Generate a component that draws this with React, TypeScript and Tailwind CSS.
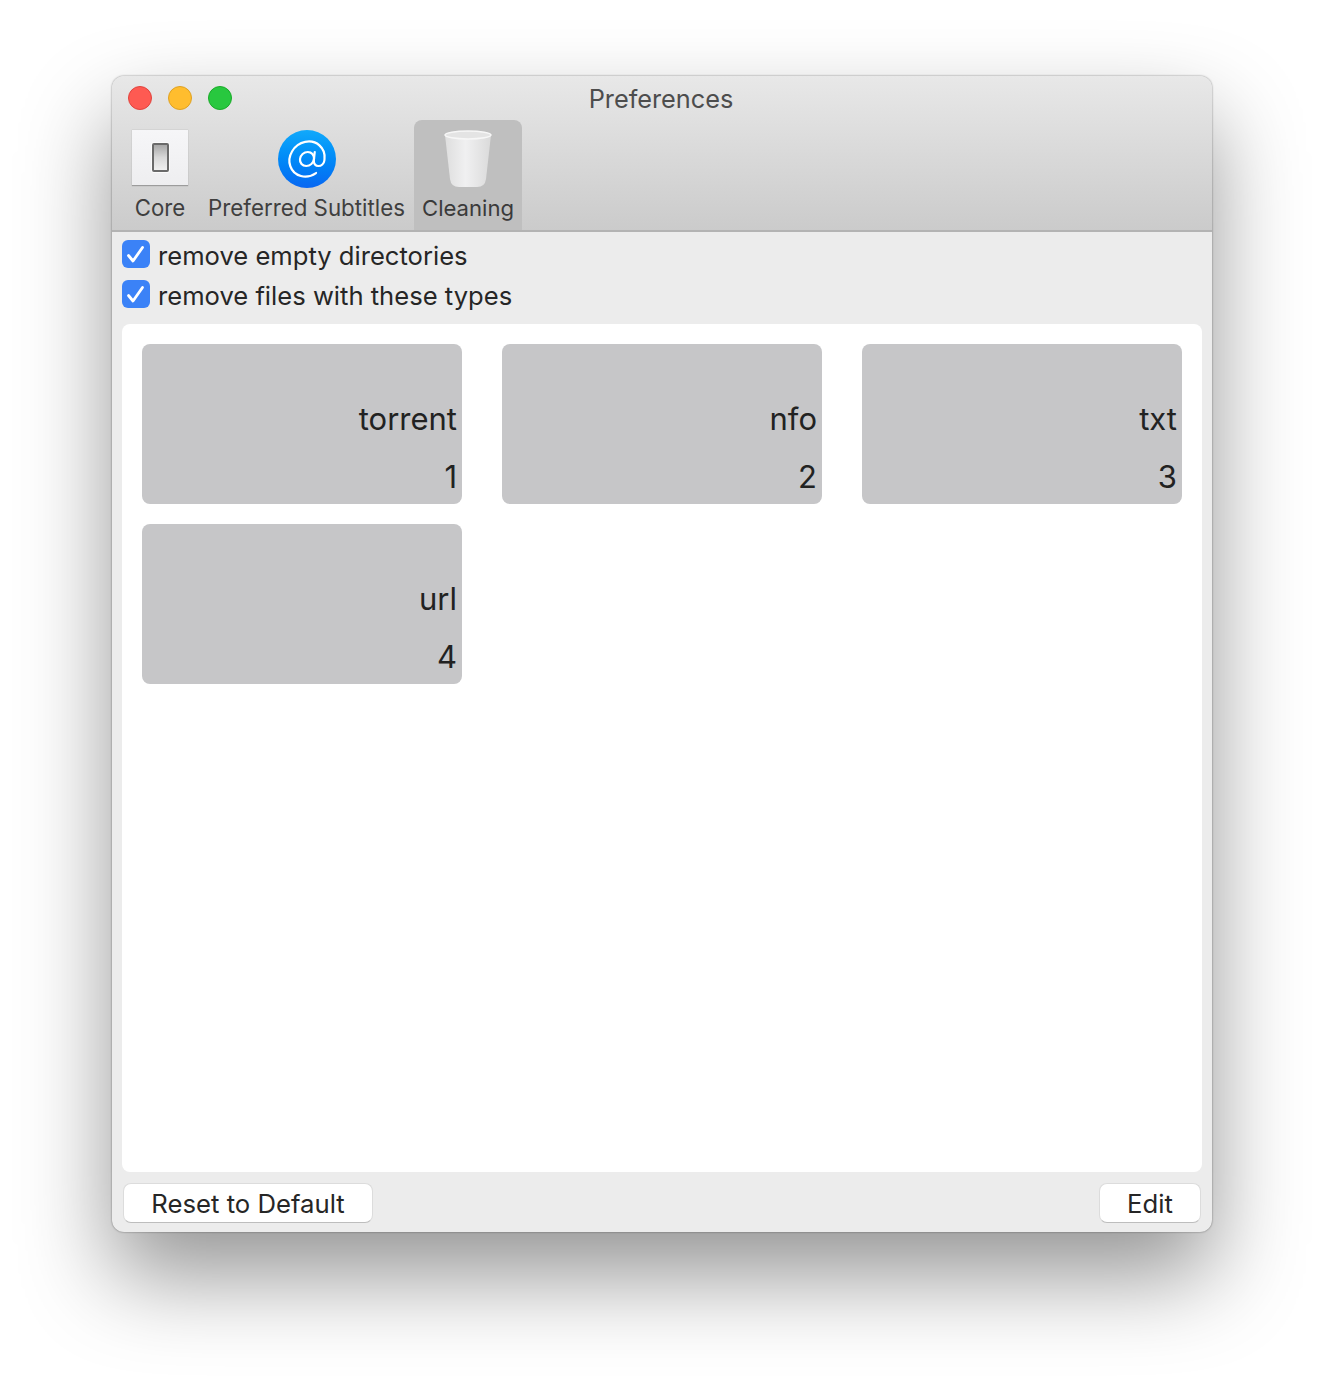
import React from "react";

function Check() {
  return (
    <span className="w-7 h-7 rounded-[6px] bg-[#3b82f7] flex items-center justify-center shrink-0">
      <svg width="28" height="28" viewBox="0 0 28 28" fill="none">
        <path d="M6.5 15.5 L11 21 L20.5 7.5" stroke="white" strokeWidth="2.8" strokeLinecap="round" strokeLinejoin="round" />
      </svg>
    </span>
  );
}

function Card({ name, n }: { name: string; n: string }) {
  return (
    <div className="h-40 rounded-lg bg-[#c6c6c8] flex flex-col items-end pr-[5px] pt-[56px] text-[31px] leading-[38px] text-[#222222]">
      <span className="h-[58px]">{name}</span>
      <span>{n}</span>
    </div>
  );
}

export default function App() {
  return (
    <div className="w-[1324px] h-[1380px] bg-white pt-[76px] pl-[112px] font-['Inter','Liberation_Sans',sans-serif]">
      <div className="w-[1100px] h-[1156px] rounded-[12px] bg-[#ececec] flex flex-col overflow-hidden shadow-[0_44px_90px_rgba(0,0,0,0.42),0_0_2px_rgba(0,0,0,0.5)]">
        <div className="h-[156px] shrink-0 bg-gradient-to-b from-[#e8e8e8] to-[#cbcbcb] border-b-2 border-[#b3b3b3] flex flex-col">
          <div className="h-[44px] shrink-0 flex items-center pl-4 relative">
            <div className="flex gap-4">
              <span className="w-6 h-6 rounded-full bg-[#fe5a52] border border-[#e0443e]" />
              <span className="w-6 h-6 rounded-full bg-[#ffbd2e] border border-[#dea123]" />
              <span className="w-6 h-6 rounded-full bg-[#28c83f] border border-[#1aab29]" />
            </div>
            <div className="absolute inset-x-0 top-[6px] pr-[2px] text-center text-[25.3px] leading-[33px] text-[#4d4d4d]">Preferences</div>
          </div>
          <div className="flex items-stretch h-[110px]">
            <div className="w-[96px] shrink-0 flex flex-col items-center pt-[10px]">
              <div className="w-14 h-14 bg-gradient-to-b from-[#f6f6f8] to-[#eeeef0] border-b border-[#9c9c9c] shadow-[0_0_1px_rgba(0,0,0,0.25)] flex items-center justify-center">
                <div className="w-[17px] h-[29px] border-2 border-[#6a6a6a] rounded-[2px] bg-gradient-to-b from-[#a8a8a8] via-[#d8d8d8] to-[#f0f0f0] shadow-[0_0_0_1px_rgba(255,255,255,0.7)]" />
              </div>
              <span className="mt-[6px] text-[22.2px] leading-[32px] text-[#3f3f3f]">Core</span>
            </div>
            <div className="w-[197px] shrink-0 flex flex-col items-center pt-[10px] whitespace-nowrap">
              <div className="w-[58px] h-[58px] rounded-full bg-gradient-to-b from-[#12a9fb] to-[#0a67f2] flex items-center justify-center">
                <svg className="-skew-x-6" width="42" height="42" viewBox="0 0 24 24" fill="none" stroke="white" strokeWidth="1.25" strokeLinecap="round" strokeLinejoin="round">
                  <circle cx="12" cy="12" r="4" />
                  <path d="M16 8v5a3 3 0 0 0 6 0v-1a10 10 0 1 0-4 8" />
                </svg>
              </div>
              <span className="mt-[4px] text-[22.3px] leading-[32px] text-[#3f3f3f]">Preferred Subtitles</span>
            </div>
            <div className="w-[108px] ml-[9px] shrink-0 rounded-t-lg bg-[#bfbfbf] flex flex-col items-center pt-[9px]">
              <svg width="50" height="60" viewBox="0 0 50 60">
                <defs>
                  <linearGradient id="can" x1="0" x2="1" y1="0" y2="0">
                    <stop offset="0" stopColor="#dedede" />
                    <stop offset="0.45" stopColor="#f0f0f1" />
                    <stop offset="1" stopColor="#dadada" />
                  </linearGradient>
                </defs>
                <path d="M2 6 L48 6 L43 50 Q42 58 34 58 L16 58 Q8 58 7 50 Z" fill="url(#can)" />
                <ellipse cx="25" cy="6" rx="23" ry="4" fill="#e4e4e4" stroke="#f7f7f7" strokeWidth="1.5" />
              </svg>
              <span className="mt-[3px] text-[22.1px] leading-[32px] text-[#3a3a3a]">Cleaning</span>
            </div>
          </div>
        </div>
        <div className="flex-1 min-h-0 flex flex-col px-[10px]">
          <div className="pt-2 h-[92px] shrink-0 flex flex-col gap-3">
            <label className="flex items-center gap-2 h-7 text-[25.6px] text-[#262626]"><Check /><span className="pt-[4px]">remove empty directories</span></label>
            <label className="flex items-center gap-2 h-7 text-[25.6px] text-[#262626]"><Check /><span className="pt-[4px]">remove files with these types</span></label>
          </div>
          <div className="h-[848px] shrink-0 rounded-lg bg-white p-5 grid grid-cols-3 gap-x-10 gap-y-5 content-start">
            <Card name="torrent" n="1" />
            <Card name="nfo" n="2" />
            <Card name="txt" n="3" />
            <Card name="url" n="4" />
          </div>
          <div className="flex justify-between px-[1px] pt-[11px]">
            <button className="w-[250px] h-[40px] rounded-lg bg-white border border-[#dcdcdc] border-b-[#bdbdbd] pt-[2px] text-[25.7px] leading-[36px] text-[#262626]">Reset to Default</button>
            <button className="w-[102px] h-[40px] rounded-lg bg-white border border-[#dcdcdc] border-b-[#bdbdbd] pt-[2px] text-[25.7px] leading-[36px] text-[#262626]">Edit</button>
          </div>
        </div>
      </div>
    </div>
  );
}
